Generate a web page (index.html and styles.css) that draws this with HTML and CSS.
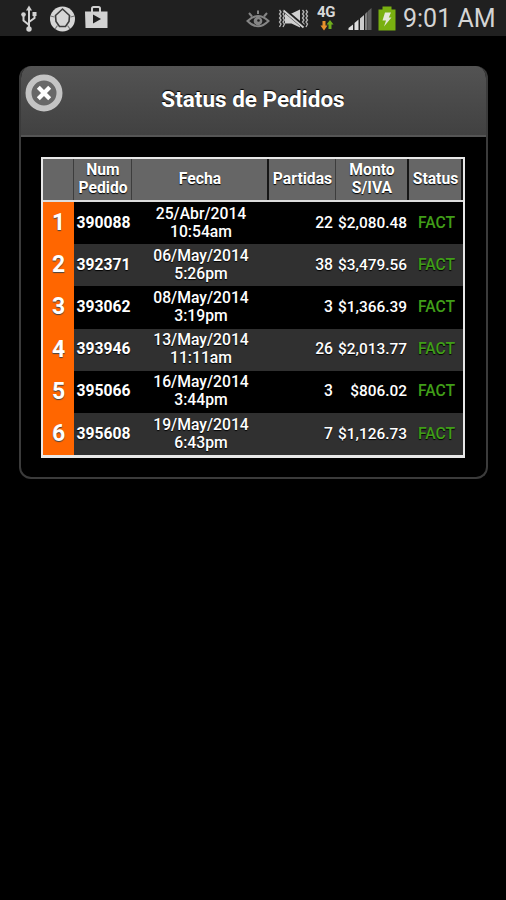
FILE: index.html
```html
<!DOCTYPE html>
<html lang="es">
<head>
<meta charset="utf-8">
<title>Status de Pedidos</title>
<link rel="stylesheet" href="styles.css">
</head>
<body>
<header class="statusbar">
  <svg class="icons-left" width="120" height="36" viewBox="0 0 120 36">
    <g stroke="#d2d2d2" stroke-width="2" fill="none">
      <path d="M29 9V28M29 25L23.500 20.500V14M29 22L34.500 18V13"/>
    </g>
    <g fill="#d2d2d2">
      <path d="M29 5.500L32 10.500H26Z"/><circle cx="29" cy="29" r="2.700"/><circle cx="23.500" cy="14.500" r="2.300"/><path d="M32.500 12h4v4h-4z"/>
    </g>
    <circle cx="62.500" cy="19" r="12.500" fill="#d6d6d6"/>
    <path d="M62.500 9L69.500 15.500L69 21.500L65.500 26.500H59.500L56 21.500L55.500 15.500Z" fill="#d6d6d6" stroke="#3c3c3c" stroke-width="1.600"/>
    <path d="M50.500 16l4 1M74.500 16l-4 1M55 29l2.500-3.500M70 29l-2.500-3.500" stroke="#777" stroke-width="1.200"/>
    <path d="M92 12V8.500Q92 7 93.500 7H98.500Q100 7 100 8.500V12" fill="none" stroke="#d2d2d2" stroke-width="2"/>
    <path d="M85 11.500H107.500V28H85.500Z" fill="#d2d2d2"/>
    <path d="M93 14.500L101 19L93 23.500Z" fill="#202020"/>
  </svg>
  <div class="status-right">
    <svg width="68" height="36" viewBox="244 0 68 36">
      <g fill="none" stroke="#858585" stroke-width="2">
        <path d="M247.500 21Q258 11 268.500 21Q258 31.500 247.500 21Z"/>
        <path d="M249 13L252 16.500M258 10.500V14M267 13L264 16.500"/>
      </g>
      <circle cx="258" cy="21" r="4.300" fill="#858585"/><circle cx="258.500" cy="20.500" r="1.300" fill="#202020"/>
      <g fill="none" stroke="#b4b4b4" stroke-width="1.300">
        <path d="M279.500 10l1.500 2-1.500 2 1.500 2-1.500 2 1.500 2-1.500 2 1.500 2-1.500 3M283 10l1.500 2-1.500 2 1.500 2-1.500 2 1.500 2-1.500 2 1.500 2-1.500 3M302.500 10l1.500 2-1.500 2 1.500 2-1.500 2 1.500 2-1.500 2 1.500 2-1.500 3M306 10l1.500 2-1.500 2 1.500 2-1.500 2 1.500 2-1.500 2 1.500 2-1.500 3"/>
      </g>
      <path d="M285 13.500H291.500L300 9.500V27.500L291.500 23.500H285Z" fill="#d0d0d0"/>
      <path d="M283.500 9.500L304 27" stroke="#202020" stroke-width="4.200"/>
      <path d="M283.500 10.500L303.500 27.500" stroke="#d0d0d0" stroke-width="1.800"/>
    </svg>
    <div class="network">
      <span class="net-label">4G</span>
      <svg width="14" height="11" viewBox="0 0 14 11"><path d="M2.500 1h3v4.500h2L4 10.500.5 5.500h2z" fill="#e8922c"/><path d="M8.500 9h3V4.500h2L10 0 6.500 4.500h2z" fill="#6fae1c"/></svg>
    </div>
    <svg width="56" height="36" viewBox="346 0 56 36">
      <path d="M348.500 30V28L353 24.500V30Z" fill="#ddd"/>
      <path d="M354.500 30V23L358.500 19.500V30Z" fill="#ddd"/>
      <path d="M360 30V18.500L364 15V30Z" fill="#ccc"/>
      <path d="M365 30V14L367.500 11.500V30Z" fill="#808080"/>
      <path d="M368 30V11L371.500 8V30Z" fill="#606060"/>
      <path d="M378.500 9.500H382.500V6.500H391.500V9.500H395.500V30.500H378.500Z" fill="#79b010"/>
      <path d="M385 12.500H391L388.800 17.500H391.500L384 26.500L386 20.500H382.500Z" fill="#e4e8da"/>
    </svg>
    <span class="time">9:01 AM</span>
  </div>
</header>
<main class="panel">
  <div class="panel-head">
    <button class="close" aria-label="Cerrar"><svg width="38" height="38" viewBox="0 0 38 38"><circle cx="19" cy="19" r="15.500" fill="#686868" stroke="#c4c4c4" stroke-width="6"/><path d="M13.300 13.300L24.700 24.700M24.700 13.300L13.300 24.700" stroke="#fff" stroke-width="4.200"/></svg></button>
    <h1>Status de Pedidos</h1>
  </div>
  <div class="orders">
    <div class="row head"><div></div><div>Num<br>Pedido</div><div>Fecha</div><div>Partidas</div><div>Monto<br>S/IVA</div><div>Status</div></div>
    <div class="row"><div class="idx">1</div><div class="order">390088</div><div class="date">25/Abr/2014<br>10:54am</div><div class="num count">22</div><div class="num">$2,080.48</div><div class="state">FACT</div></div>
    <div class="row"><div class="idx">2</div><div class="order">392371</div><div class="date">06/May/2014<br>5:26pm</div><div class="num count">38</div><div class="num">$3,479.56</div><div class="state">FACT</div></div>
    <div class="row"><div class="idx">3</div><div class="order">393062</div><div class="date">08/May/2014<br>3:19pm</div><div class="num count">3</div><div class="num">$1,366.39</div><div class="state">FACT</div></div>
    <div class="row"><div class="idx">4</div><div class="order">393946</div><div class="date">13/May/2014<br>11:11am</div><div class="num count">26</div><div class="num">$2,013.77</div><div class="state">FACT</div></div>
    <div class="row"><div class="idx">5</div><div class="order">395066</div><div class="date">16/May/2014<br>3:44pm</div><div class="num count">3</div><div class="num">$806.02</div><div class="state">FACT</div></div>
    <div class="row"><div class="idx">6</div><div class="order">395608</div><div class="date">19/May/2014<br>6:43pm</div><div class="num count">7</div><div class="num">$1,126.73</div><div class="state">FACT</div></div>
  </div>
</main>
</body>
</html>
```

FILE: styles.css
```css
* { box-sizing: border-box; }
body { margin: 0; min-height: 900px; background: #000; color: #fff; font-family: Roboto, sans-serif; overflow: hidden; }
.statusbar { height: 36px; background: #202020; display: flex; justify-content: space-between; }
.status-right { display: flex; }
.status-right svg, .icons-left { display: block; flex: none; }
.network { width: 34px; padding: 5px 0 0 5px; }
.net-label { display: block; font-size: 15px; font-weight: 700; line-height: 15px; letter-spacing: -.3px; color: #d8d8d8; }
.network svg { margin-left: 3px; }
.time { width: 104px; padding-left: 1px; font-size: 25px; line-height: 38px; color: #d4d4d4; white-space: nowrap; }

.panel { width: 469px; height: 413px; margin: 30px 0 0 19px; border: 2px solid #3b3b3b; border-top: 0; border-radius: 12px; overflow: hidden; }
.panel-head { height: 71px; margin: 0 -2px; display: grid; grid-template-columns: 50px 1fr 50px; background: linear-gradient(#535353, #414141); border-bottom: 2px solid #555; }
.close { width: 38px; height: 38px; margin: 8px 0 0 6px; padding: 0; border: 0; background: none; }
.close svg { display: block; }
h1 { margin: 0; padding-right: 1px; text-align: center; font-size: 22.500px; line-height: 67px; font-weight: 700; text-shadow: 0 -1px 1px #000; white-space: nowrap; }

.orders { width: 424px; height: 301px; margin: 20px 0 0 20px; border: 2px solid #e8e8e8; border-bottom-width: 3px; background: #000; }
.row { display: grid; grid-template-columns: 31px 58px 137px 67px 73px 1fr; height: 42.200px; font-size: 15.700px; line-height: 18px; align-items: center; padding-right: 1px; text-shadow: 0 1px 1px #000; }
.row:nth-child(odd) { background: #303030; }
.row.head { height: 43px; background: #000; border-bottom: 2px solid #ddd; align-items: stretch; font-weight: 700; text-align: center; padding-right: 0; }
.head > div { display: flex; align-items: center; justify-content: center; background: #666; border-right: 2px solid #161616; padding: 0 0 1px 1px; }
.head > div:nth-child(-n+2) { border-right: 1px solid #3d3d3d; }
.head > div:nth-child(4) { border-right: 1px solid #3d3d3d; }
.idx { align-self: stretch; display: flex; align-items: center; justify-content: center; background: #ff6600; font-size: 23px; font-weight: 700; text-shadow: 0 1px 1px #444; }
.order { text-align: center; font-weight: 700; padding: 0 0 1px 1px; }
.date { text-align: center; font-weight: 500; padding: 0 0 1px 1px; }
.num { text-align: right; font-weight: 500; font-size: 15.400px; padding: 0 2px 1px 0; }
.num.count { padding-right: 3px; font-size: 15.700px; }
.state { text-align: center; color: #409d18; font-weight: 500; padding: 0 0 1px 2px; }
```
